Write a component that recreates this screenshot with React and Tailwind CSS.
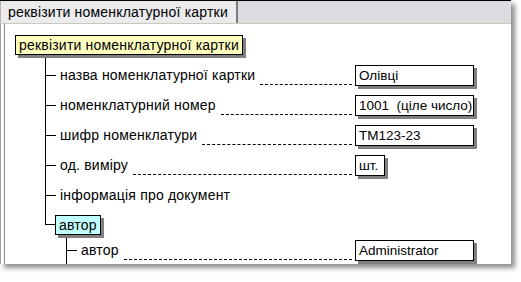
import React from 'react';

const fields = [
  { label: 'назва номенклатурної картки', value: 'Олівці', box: 'w-[119px]' },
  { label: 'номенклатурний номер', value: '1001  (ціле число)', box: 'w-[119px]' },
  { label: 'шифр номенклатури', value: 'ТМ123-23', box: 'w-[119px]' },
  { label: 'од. виміру', value: 'шт.', box: 'w-[30px]' },
  { label: 'інформація про документ' },
];

const ValueBox = ({ value, box }) => (
  <div className="w-[122px] shrink-0">
    <div
      className={`${box} h-[21px] border border-black bg-white pl-[3px] text-[13.5px] tracking-normal leading-[19px] whitespace-pre overflow-hidden shadow-[3px_3px_0_#808080]`}
    >
      {value}
    </div>
  </div>
);

const Row = ({ label, value, box }) => (
  <div className="flex h-[30px] items-center">
    <div className="w-[10px] h-px bg-black" />
    <span className="ml-[4px] whitespace-nowrap">{label}</span>
    {value !== undefined && (
      <>
        <div className="ml-[5px] mr-[3px] flex-1 self-end mb-[5px] border-t border-dashed border-black" />
        <ValueBox value={value} box={box} />
      </>
    )}
  </div>
);

const App = () => {
  return (
    <div className="relative w-[521px] h-[282px] bg-white overflow-hidden font-['Liberation_Sans',Arial,sans-serif] text-[14px] tracking-[0.2px] text-black">
      <div className="w-[511px] h-[264px] overflow-hidden bg-white shadow-[4px_4px_5px_rgba(0,0,0,0.45)]">
        {/* tab strip */}
        <div className="flex h-[24px] border-t border-black bg-[#dcdce0] border-b border-b-[#c8c8bc]">
          <div className="flex items-center w-[238px] pl-[7px] bg-[#ebebee] border-l border-[#b0b0b0] border-r-2 border-r-[#7a7a7a] whitespace-nowrap">
            реквізити номенклатурної картки
          </div>
        </div>

        {/* content */}
        <div className="h-full border-l border-[#a0a0a0]">
          <div className="h-full ml-[3px] border-l border-[#8a8a8a] pt-[11px] pl-[10px]">
            <div className="inline-block h-[20px] px-[3px] leading-[18px] border border-black bg-[#ffffc0] shadow-[3px_3px_0_#808080] whitespace-nowrap">
              реквізити номенклатурної картки
            </div>

            <div className="ml-[30px] w-[432px] border-l border-black pt-[4px]">
              {fields.map((f) => (
                <Row key={f.label} {...f} />
              ))}
            </div>

            {/* автор node */}
            <div className="ml-[30px] w-[432px]">
              <div className="flex items-start">
                <div className="w-[10px] h-[15px] border-l border-b border-black" />
                <div className="h-[20px] px-[3px] leading-[18px] border border-black bg-[#c0ffff] shadow-[3px_3px_0_#808080] mt-[5px]">
                  автор
                </div>
              </div>
              <div className="ml-[21px] border-l border-black h-[60px]">
                <div className="w-[410px]">
                  <Row label="автор" value="Administrator" box="w-[119px]" />
                  <div className="flex justify-end pt-[2px]">
                    <div className="w-[122px]">
                      <div className="w-[119px] h-[21px] border border-black" />
                    </div>
                  </div>
                </div>
              </div>
            </div>
          </div>
        </div>
      </div>
    </div>
  );
};

export default App;
